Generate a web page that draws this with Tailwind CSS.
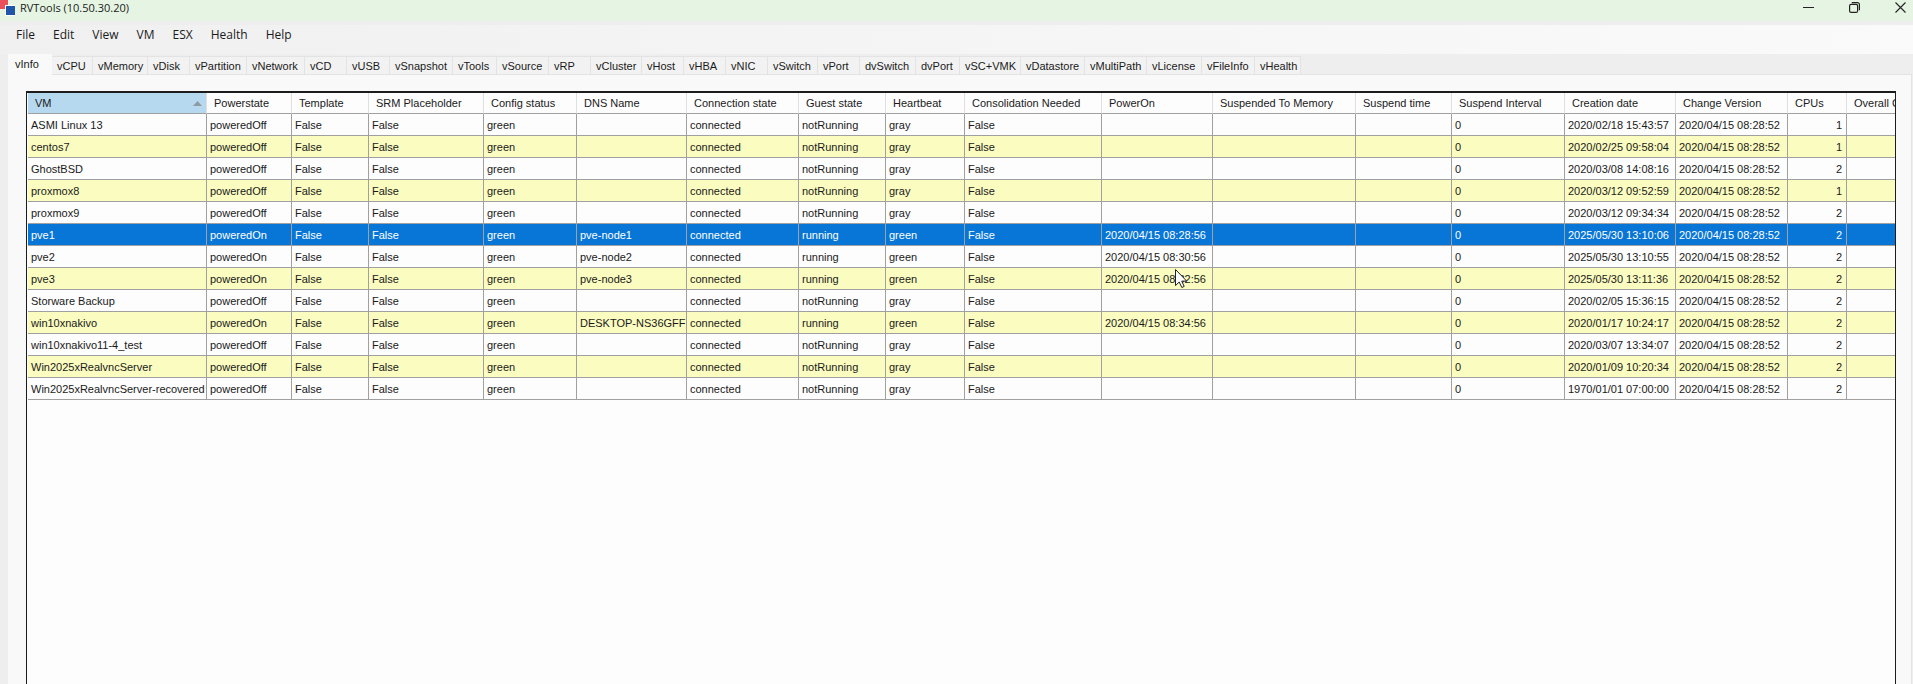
<!DOCTYPE html>
<html lang="en">
<head>
  <meta charset="UTF-8" />
  <meta name="viewport" content="width=device-width, initial-scale=1" />
  <title>RVTools (10.50.30.20)</title>
  <script src="https://cdn.jsdelivr.net/npm/@tailwindcss/browser@4"></script>
</head>
<body class="h-screen overflow-hidden flex flex-col bg-[#eeeeee] text-[#1a1a1a] font-['Liberation_Sans',sans-serif] text-[11px]">

  <!-- Title bar -->
  <header class="h-[21px] shrink-0 flex items-start justify-between bg-[#e6f5e3] font-['Open_Sans',sans-serif]">
    <div class="flex items-start gap-[5px]">
      <svg class="w-[15px] h-4" viewBox="0 0 15 16">
        <rect x="0" y="0" width="8" height="9" fill="#e8505b" />
        <rect x="5" y="5" width="10" height="11" fill="#fff" />
        <rect x="6" y="6" width="9" height="9" fill="#1f56a8" />
      </svg>
      <h1 class="text-[11px] leading-[16px]">RVTools (10.50.30.20)</h1>
    </div>
    <div class="flex items-center gap-[35px] pr-[7px] pt-0.5">
      <button aria-label="Minimize">
        <svg class="block w-[11px] h-[11px]" viewBox="0 0 11 11" fill="none" stroke="#222"><path d="M0 5.5h11" /></svg>
      </button>
      <button aria-label="Restore">
        <svg class="block w-[11px] h-[11px]" viewBox="0 0 11 11" fill="none" stroke="#222" stroke-width="1.2"><rect x=".6" y="2.4" width="8" height="8" rx="1.5" /><path d="M2.8.6h5.6a2 2 0 0 1 2 2v5.6" /></svg>
      </button>
      <button aria-label="Close">
        <svg class="block w-[11px] h-[11px]" viewBox="0 0 11 11" fill="none" stroke="#222" stroke-width="1.1"><path d="M.5.5l10 10M10.500.5l-10 10" /></svg>
      </button>
    </div>
  </header>

  <!-- Menu -->
  <nav class="h-[29px] mt-1 shrink-0 flex items-start gap-[18px] pl-4 pt-px bg-linear-to-r from-[#f0f0f0] to-[#fafafa] font-['Open_Sans',sans-serif] text-[12px] leading-[18px]">
    <button>File</button>
    <button>Edit</button>
    <button>View</button>
    <button>VM</button>
    <button>ESX</button>
    <button>Health</button>
    <button>Help</button>
  </nav>

  <!-- Tabs -->
  <div id="tabs" role="tablist" class="h-[21px] shrink-0 flex items-end pl-2 leading-[16px]"></div>

  <!-- Tab page -->
  <main class="flex-1 min-h-0 ml-2 mr-px pt-4 pl-[18px] pr-[15px] bg-[#f9f9f9] border-r border-[#e3e3e3]">
    <div class="h-full overflow-hidden border-t-2 border-x border-[#1c1c1c] bg-[#fdfdfd] pl-px">
      <table class="table-fixed border-separate border-spacing-0 w-[1928px] leading-[14px]">
        <thead><tr id="head"></tr></thead>
        <tbody id="rows"></tbody>
      </table>
    </div>
  </main>

  <!-- Mouse pointer -->
  <svg class="absolute left-[1174px] top-[268px] w-[14px] h-[22px]" viewBox="0 0 14 22" fill="#fff" stroke="#222" stroke-linejoin="round"><path d="M1.500 1.500v16l3.700-3.500 2.600 5.500 2.400-1.100-2.500-5.300h5z" /></svg>

  <script>
    const tabs = [
      ['vInfo', 'w-11'], ['vCPU', 'w-[41px]'], ['vMemory', 'w-[55px]'], ['vDisk', 'w-[42px]'],
      ['vPartition', 'w-[57px]'], ['vNetwork', 'w-[58px]'], ['vCD', 'w-[42px]'], ['vUSB', 'w-[43px]'],
      ['vSnapshot', 'w-[63px]'], ['vTools', 'w-11'], ['vSource', 'w-[52px]'], ['vRP', 'w-[42px]'],
      ['vCluster', 'w-[51px]'], ['vHost', 'w-[42px]'], ['vHBA', 'w-[42px]'], ['vNIC', 'w-[42px]'],
      ['vSwitch', 'w-[50px]'], ['vPort', 'w-[42px]'], ['dvSwitch', 'w-[56px]'], ['dvPort', 'w-11'],
      ['vSC+VMK', 'w-[61px]'], ['vDatastore', 'w-[64px]'], ['vMultiPath', 'w-[62px]'], ['vLicense', 'w-[55px]'],
      ['vFileInfo', 'w-[53px]'], ['vHealth', 'w-[46px]']
    ];

    const columns = [
      ['VM', 'w-[179px]'], ['Powerstate', 'w-[85px]'], ['Template', 'w-[77px]'], ['SRM Placeholder', 'w-[115px]'],
      ['Config status', 'w-[93px]'], ['DNS Name', 'w-[110px]'], ['Connection state', 'w-[112px]'], ['Guest state', 'w-[87px]'],
      ['Heartbeat', 'w-[79px]'], ['Consolidation Needed', 'w-[137px]'], ['PowerOn', 'w-[111px]'], ['Suspended To Memory', 'w-[143px]'],
      ['Suspend time', 'w-[96px]'], ['Suspend Interval', 'w-[113px]'], ['Creation date', 'w-[111px]'], ['Change Version', 'w-[112px]'],
      ['CPUs', 'w-[59px]'], ['Overall C', 'w-[109px]']
    ];

    // name, dns name, power on time, creation date, cpus
    const vms = [
      ['ASMI Linux 13', '', '', '2020/02/18 15:43:57', 1],
      ['centos7', '', '', '2020/02/25 09:58:04', 1],
      ['GhostBSD', '', '', '2020/03/08 14:08:16', 2],
      ['proxmox8', '', '', '2020/03/12 09:52:59', 1],
      ['proxmox9', '', '', '2020/03/12 09:34:34', 2],
      ['pve1', 'pve-node1', '2020/04/15 08:28:56', '2025/05/30 13:10:06', 2],
      ['pve2', 'pve-node2', '2020/04/15 08:30:56', '2025/05/30 13:10:55', 2],
      ['pve3', 'pve-node3', '2020/04/15 08:32:56', '2025/05/30 13:11:36', 2],
      ['Storware Backup', '', '', '2020/02/05 15:36:15', 2],
      ['win10xnakivo', 'DESKTOP-NS36GFF', '2020/04/15 08:34:56', '2020/01/17 10:24:17', 2],
      ['win10xnakivo11-4_test', '', '', '2020/03/07 13:34:07', 2],
      ['Win2025xRealvncServer', '', '', '2020/01/09 10:20:34', 2],
      ['Win2025xRealvncServer-recovered', '', '', '1970/01/01 07:00:00', 2]
    ];
    const selected = 5;

    document.getElementById('tabs').innerHTML = tabs.map(([name, width], i) => {
      const state = i === 0
        ? 'h-[21px] bg-[#f9f9f9] pl-[7px] pb-0.5'
        : 'h-[19px] bg-[#f2f2f2] border-y border-r border-[#e3e3e3] pl-[5px]';
      return `<button role="tab" aria-selected="${i === 0}" class="${width} ${state} shrink-0 text-left whitespace-nowrap">${name}</button>`;
    }).join('') + '<div class="flex-1 mr-px border-b border-[#e3e3e3]"></div>';

    document.getElementById('head').innerHTML = columns.map(([name, width], i) => {
      const color = i === 0 ? 'bg-[#b7d9ef]' : 'bg-[#fdfdfd]';
      const arrow = i === 0 ? '<svg class="w-[9px] h-[5px] mr-1" viewBox="0 0 9 5" fill="#8e9ba3"><path d="M4.500 0L9 5H0z" /></svg>' : '';
      return `<th class="${width} ${color} h-[21px] p-0 pl-[7px] font-normal text-left whitespace-nowrap border-b border-r border-b-[#a0a0a0] border-r-[#e0e0e0]"><div class="flex items-center justify-between">${name}${arrow}</div></th>`;
    }).join('');

    document.getElementById('rows').innerHTML = vms.map(([name, dns, powerOn, created, cpus], i) => {
      const on = powerOn !== '';
      const cells = [
        name, on ? 'poweredOn' : 'poweredOff', 'False', 'False', 'green', dns, 'connected',
        on ? 'running' : 'notRunning', on ? 'green' : 'gray', 'False', powerOn, '', '', '0',
        created, '2020/04/15 08:28:52', cpus, ''
      ];
      const color = i === selected ? 'bg-[#0876d6] text-white' : i % 2 ? 'bg-[#fbfcc0]' : 'bg-[#fdfdfd]';
      return `<tr class="${color}">` + cells.map((cell, c) =>
        `<td class="h-[22px] p-0 pl-[3px] whitespace-nowrap border-b border-r border-[#a0a0a0] ${c === 16 ? 'text-right pr-1' : ''}">${cell}</td>`
      ).join('') + '</tr>';
    }).join('');
  </script>
</body>
</html>
